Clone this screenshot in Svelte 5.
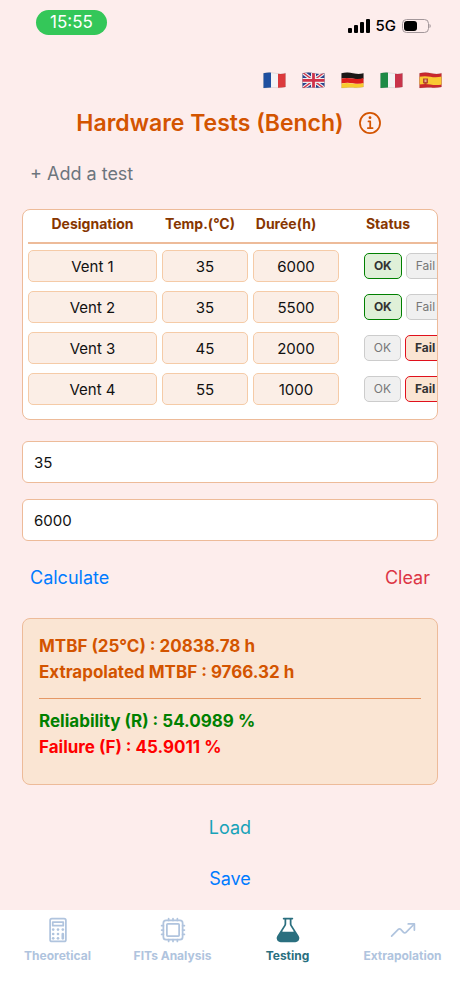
<script>
	const languages = [
		{ code: 'fr', label: 'Français' },
		{ code: 'gb', label: 'English' },
		{ code: 'de', label: 'Deutsch' },
		{ code: 'it', label: 'Italiano' },
		{ code: 'es', label: 'Español' }
	];

	const tabs = [
		{ id: 'theoretical', label: 'Theoretical' },
		{ id: 'fits', label: 'FITs Analysis' },
		{ id: 'testing', label: 'Testing' },
		{ id: 'extrapolation', label: 'Extrapolation' }
	];

	const lastRun = { mtbf: 20838.78, extrapolated: 9766.32, reliability: 54.0989 };

	let tests = $state([
		{ name: 'Vent 1', temp: '35', hours: '6000', ok: true },
		{ name: 'Vent 2', temp: '35', hours: '5500', ok: true },
		{ name: 'Vent 3', temp: '45', hours: '2000', ok: false },
		{ name: 'Vent 4', temp: '55', hours: '1000', ok: false }
	]);

	let language = $state('gb');
	let activeTab = $state('testing');
	let targetTemp = $state('35');
	let targetHours = $state('6000');
	let result = $state(lastRun);

	const failure = $derived(result ? 100 - result.reliability : 0);

	function addTest() {
		tests.push({ name: `Vent ${tests.length + 1}`, temp: '', hours: '', ok: true });
	}

	function calculate() {
		result = lastRun;
	}

	function clearAll() {
		tests = [];
		targetTemp = '';
		targetHours = '';
		result = null;
	}
</script>

<div class="screen">
	<header class="status-bar">
		<span class="clock">15:55</span>
		<div class="signal">
			<svg width="22" height="14" viewBox="0 0 22 14" aria-hidden="true">
				<rect x="0" y="9" width="4" height="5" rx="1" />
				<rect x="6" y="6" width="4" height="8" rx="1" />
				<rect x="12" y="3" width="4" height="11" rx="1" />
				<rect x="18" y="0" width="4" height="14" rx="1" />
			</svg>
			<span>5G</span>
			<svg width="29" height="14" viewBox="0 0 29 14" aria-hidden="true">
				<rect x="0.5" y="0.5" width="26" height="13" rx="4" fill="none" stroke="#a3979a" />
				<rect x="2" y="2" width="13" height="10" rx="3" />
				<path d="M27.5 5c1.6.6 1.6 3.4 0 4z" fill="#a3979a" />
			</svg>
		</div>
	</header>

	<main>
		<div class="languages">
			{#each languages as lang}
				<button class="flag" aria-label={lang.label} aria-pressed={language === lang.code} onclick={() => (language = lang.code)}>
					<svg width="23" height="17" viewBox="0 0 23 17" aria-hidden="true">
						<defs>
							<clipPath id="wave-{lang.code}">
								<path d="M.5 1.3Q6 -.3 12 1.2T22.5 1.2V15Q17 16.2 12 15.6T.5 16Z" />
							</clipPath>
						</defs>
						<g clip-path="url(#wave-{lang.code})">
							{#if lang.code === 'fr'}
								<path fill="#f3f3f5" d="M0 0h23v17H0z" />
								<path fill="#1f50a0" d="M0 0h8v17H0z" />
								<path fill="#dc3a3c" d="M15 0h8v17h-8z" />
							{:else if lang.code === 'gb'}
								<path fill="#27418c" d="M0 0h23v17H0z" />
								<path stroke="#eee" stroke-width="3.6" d="M0 0l23 17M23 0L0 17" />
								<path stroke="#d0334a" stroke-width="1.4" d="M0 0l23 17M23 0L0 17" />
								<path stroke="#eee" stroke-width="5" d="M11.5 0v17M0 8.4h23" />
								<path stroke="#d0334a" stroke-width="2.8" d="M11.5 0v17M0 8.4h23" />
							{:else if lang.code === 'de'}
								<path fill="#1b1716" d="M0 0h23v6.4q-6 1-11.5 0T0 6.5z" />
								<path fill="#dc1f1b" d="M0 6.5q6-1.2 11.5 0T23 6v5.2q-6 1-11.5 0T0 11.5z" />
								<path fill="#f8cb2e" d="M0 11.5q6-1.2 11.5 0T23 11v6H0z" />
							{:else if lang.code === 'it'}
								<path fill="#f3f3f3" d="M0 0h23v17H0z" />
								<path fill="#1d8a45" d="M0 0h8v17H0z" />
								<path fill="#c8344a" d="M15 0h8v17h-8z" />
							{:else}
								<path fill="#c9282d" d="M0 0h23v17H0z" />
								<path fill="#f9c932" d="M0 4.8q6-1.2 11.5 0T23 4.5v8q-6 1-11.5 0T0 12.6z" />
								<path fill="#b5462e" d="M4 6.5h5v4.5q-2.5 2-5 0z" />
								<path fill="#e3a797" d="M5.5 7.5h2v2.5h-2z" />
							{/if}
						</g>
						<path d="M.5 1.3Q6 -.3 12 1.2T22.5 1.2V15Q17 16.2 12 15.6T.5 16Z" fill="none" stroke="#000" stroke-opacity=".15" stroke-width=".6" />
					</svg>
				</button>
			{/each}
		</div>

		<div class="title">
			<h1>Hardware Tests (Bench)</h1>
			<button class="info" aria-label="Information">
				<svg width="28" height="28" viewBox="-8 -8 512 512" fill="none" stroke="currentColor" stroke-width="32" aria-hidden="true">
					<circle cx="248" cy="248" r="184" />
					<path stroke-linecap="round" stroke-linejoin="round" d="M220 220h32v116M208 340h88" />
					<circle cx="248" cy="150" r="26" fill="currentColor" stroke="none" />
				</svg>
			</button>
		</div>

		<button class="link muted" onclick={addTest}>+ Add a test</button>

		<div class="table-card">
			<table>
				<thead>
					<tr>
						<th class="name">Designation</th>
						<th class="num">Temp.(°C)</th>
						<th class="num">Durée(h)</th>
						<th class="status">Status</th>
					</tr>
				</thead>
				<tbody>
					{#each tests as test}
						<tr>
							<td class="name"><input bind:value={test.name} aria-label="Designation" /></td>
							<td class="num"><input bind:value={test.temp} aria-label="Temperature" inputmode="numeric" /></td>
							<td class="num"><input bind:value={test.hours} aria-label="Duration" inputmode="numeric" /></td>
							<td class="status">
								<div class="choices">
									<button class:ok={test.ok} onclick={() => (test.ok = true)}>OK</button>
									<button class:fail={!test.ok} onclick={() => (test.ok = false)}>Fail</button>
								</div>
							</td>
						</tr>
					{/each}
				</tbody>
			</table>
		</div>

		<input class="field" bind:value={targetTemp} aria-label="Target temperature" inputmode="numeric" />
		<input class="field" bind:value={targetHours} aria-label="Target duration" inputmode="numeric" />

		<div class="actions">
			<button class="link blue" onclick={calculate}>Calculate</button>
			<button class="link red" onclick={clearAll}>Clear</button>
		</div>

		{#if result}
			<section class="result">
				<p>MTBF (25°C) : {result.mtbf.toFixed(2)} h</p>
				<p>Extrapolated MTBF : {result.extrapolated.toFixed(2)} h</p>
				<hr />
				<p class="reliability">Reliability (R) : {result.reliability.toFixed(4)} %</p>
				<p class="failure">Failure (F) : {failure.toFixed(4)} %</p>
			</section>
		{/if}

		<div class="storage">
			<button class="link teal">Load</button>
			<button class="link blue">Save</button>
		</div>
	</main>

	<nav>
		{#each tabs as tab}
			<button class="tab" class:active={activeTab === tab.id} onclick={() => (activeTab = tab.id)}>
				<svg width="28" height="28" viewBox="0 0 512 512" fill="none" stroke="currentColor" stroke-width="32" stroke-linecap="round" stroke-linejoin="round" aria-hidden="true">
					{#if tab.id === 'theoretical'}
						<rect x="112" y="48" width="288" height="416" rx="32" />
						<rect x="160" y="112" width="192" height="64" />
						<g fill="currentColor" stroke="none">
							<circle cx="168" cy="248" r="24" />
							<circle cx="256" cy="248" r="24" />
							<circle cx="344" cy="248" r="24" />
							<circle cx="168" cy="328" r="24" />
							<circle cx="256" cy="328" r="24" />
							<circle cx="168" cy="408" r="24" />
							<circle cx="256" cy="408" r="24" />
							<rect x="320" y="304" width="48" height="128" rx="24" />
						</g>
					{:else if tab.id === 'fits'}
						<rect x="80" y="80" width="352" height="352" rx="48" />
						<rect x="144" y="144" width="224" height="224" rx="16" />
						<path d="M256 80V48M336 80V48M176 80V48M256 464v-32M336 464v-32M176 464v-32M432 256h32M432 336h32M432 176h32M48 256h32M48 336h32M48 176h32" />
					{:else if tab.id === 'testing'}
						<path fill="currentColor" stroke="none" d="M452.32 365 327.4 167.12A48.07 48.07 0 0 1 320 141.48V64h15.56c8.61 0 16-6.62 16.43-15.23A16 16 0 0 0 336 32H176.45c-8.61 0-16 6.62-16.43 15.23A16 16 0 0 0 176 64h16v77.48a47.92 47.92 0 0 1-7.41 25.63L59.68 365a74 74 0 0 0-2.5 75.84C70.44 465.19 96.36 480 124.13 480h263.74c27.77 0 53.69-14.81 66.95-39.21a74 74 0 0 0-2.5-75.79zM211.66 184.2A79.94 79.94 0 0 0 224 141.48V68a4 4 0 0 1 4-4h56a4 4 0 0 1 4 4v73.48a79.94 79.94 0 0 0 12.35 42.72l57.8 91.53A8 8 0 0 1 351.37 288H160.63a8 8 0 0 1-6.77-12.27z" />
					{:else}
						<path d="M352 144h112v112" />
						<path d="M48 368l121.37-121.37a32 32 0 0 1 45.26 0l50.74 50.74a32 32 0 0 0 45.26 0L448 160" />
					{/if}
				</svg>
				<span>{tab.label}</span>
			</button>
		{/each}
	</nav>
</div>

<style>
:global(body) {
	margin: 0;
	background: #fdedec;
}

.screen {
	min-height: 100vh;
	display: flex;
	flex-direction: column;
	font-family: Inter, "Liberation Sans", sans-serif;
	color: #111;
}

button {
	margin: 0;
	padding: 0;
	border: 0;
	background: none;
	font: inherit;
	color: inherit;
	cursor: pointer;
}

input {
	box-sizing: border-box;
	width: 100%;
	font: inherit;
	color: inherit;
}

svg {
	display: block;
}

/* STATUS BAR */
.status-bar {
	display: flex;
	justify-content: space-between;
	align-items: center;
	padding: 10px 29px 0 36px;
}
.clock {
	padding: 0 14px;
	border-radius: 13px;
	background: #34c759;
	color: #fff;
	font-size: 17px;
	line-height: 25px;
}
.signal {
	display: flex;
	align-items: center;
	gap: 6px;
	padding-top: 7px;
	color: #000;
	font-size: 15px;
	font-weight: 500;
	line-height: 18px;
}

main {
	flex: 1;
	display: flex;
	flex-direction: column;
	padding: 37px 22px 0;
}

/* HEADER */
.languages {
	display: flex;
	justify-content: flex-end;
	gap: 16px;
	margin-right: -4px;
}
.title {
	display: flex;
	justify-content: center;
	align-items: center;
	gap: 12px;
	margin-top: 19px;
	color: #d35400;
}
h1 {
	margin: 0;
	font-size: 23px;
	font-weight: 600;
	line-height: 30px;
}

.link {
	padding: 0 8px;
	font-size: 18px;
	line-height: 27px;
}
.muted {
	align-self: flex-start;
	margin-top: 22px;
	color: #6c757d;
}
.blue {
	color: #007bff;
}
.red {
	color: #dc3545;
}
.teal {
	color: #17a2b8;
}

/* TABLE */
.table-card {
	margin-top: 22px;
	padding: 0 0 14px 5px;
	border: 1px solid #edbb99;
	border-radius: 8px;
	background: #fff;
	overflow: hidden;
}
table {
	display: block;
	width: 433px;
}
thead,
tbody {
	display: block;
}
tr {
	display: flex;
}
thead tr {
	border-bottom: 2px solid #edbb99;
}
tbody tr {
	gap: 5px;
	margin-top: 9px;
}
tbody tr:first-child {
	margin-top: 6px;
}
th {
	box-sizing: border-box;
	padding: 5px 0 9px;
	font-size: 14px;
	font-weight: 700;
	line-height: 18px;
	color: #873600;
}
th,
td {
	flex: none;
}
td {
	padding: 0;
}
.name {
	width: 129px;
}
.num {
	width: 86px;
}
.status {
	width: 118px;
}
td input {
	display: block;
	height: 32px;
	padding: 0;
	border: 1px solid #f5cba7;
	border-radius: 5px;
	background: #fbeee6;
	font-size: 15px;
	text-align: center;
}
.choices {
	display: flex;
	justify-content: center;
	align-items: center;
	gap: 4px;
	height: 32px;
	padding-left: 3px;
}
.choices button {
	padding: 0 9px;
	border: 1px solid #ccc;
	border-radius: 5px;
	background: #f0f0f0;
	color: #777;
	font-size: 12px;
	line-height: 24px;
}
.choices .ok,
.choices .fail {
	color: #333;
	font-weight: 700;
}
.choices .ok {
	border-color: #008000;
	background: #dff0d8;
}
.choices .fail {
	border-color: #e0101c;
	background: #fae5d3;
}

/* FORM */
.field {
	height: 42px;
	margin-top: 21px;
	padding: 0 11px;
	border: 1px solid #edbb99;
	border-radius: 6px;
	background: #fff;
	font-size: 15px;
}
.field + .field {
	margin-top: 16px;
}
.actions {
	display: flex;
	justify-content: space-between;
	margin-top: 23px;
}

/* RESULT */
.result {
	margin-top: 27px;
	padding: 14px 16px 24px;
	border: 1px solid #edbb99;
	border-radius: 8px;
	background: #fae5d3;
	color: #d35400;
	font-size: 17px;
	font-weight: 700;
	line-height: 26px;
}
.result p {
	margin: 0;
}
.result hr {
	margin: 13px 0 9px;
	border: 0;
	border-top: 1px solid #e59866;
}
.result .reliability {
	color: #008000;
}
.result .failure {
	color: #f00;
}

.storage {
	display: flex;
	flex-direction: column;
	align-items: center;
	gap: 24px;
	padding: 29px 0 17px;
}

/* TABS */
nav {
	display: flex;
	padding: 6px 0 31px;
	background: #fff;
}
.tab {
	flex: 1 1 0;
	display: flex;
	flex-direction: column;
	align-items: center;
	gap: 4px;
	color: #b0c4de;
	font-size: 12px;
	font-weight: 700;
	line-height: 16px;
	white-space: nowrap;
}
.tab.active {
	color: #2a6f7f;
}
</style>
